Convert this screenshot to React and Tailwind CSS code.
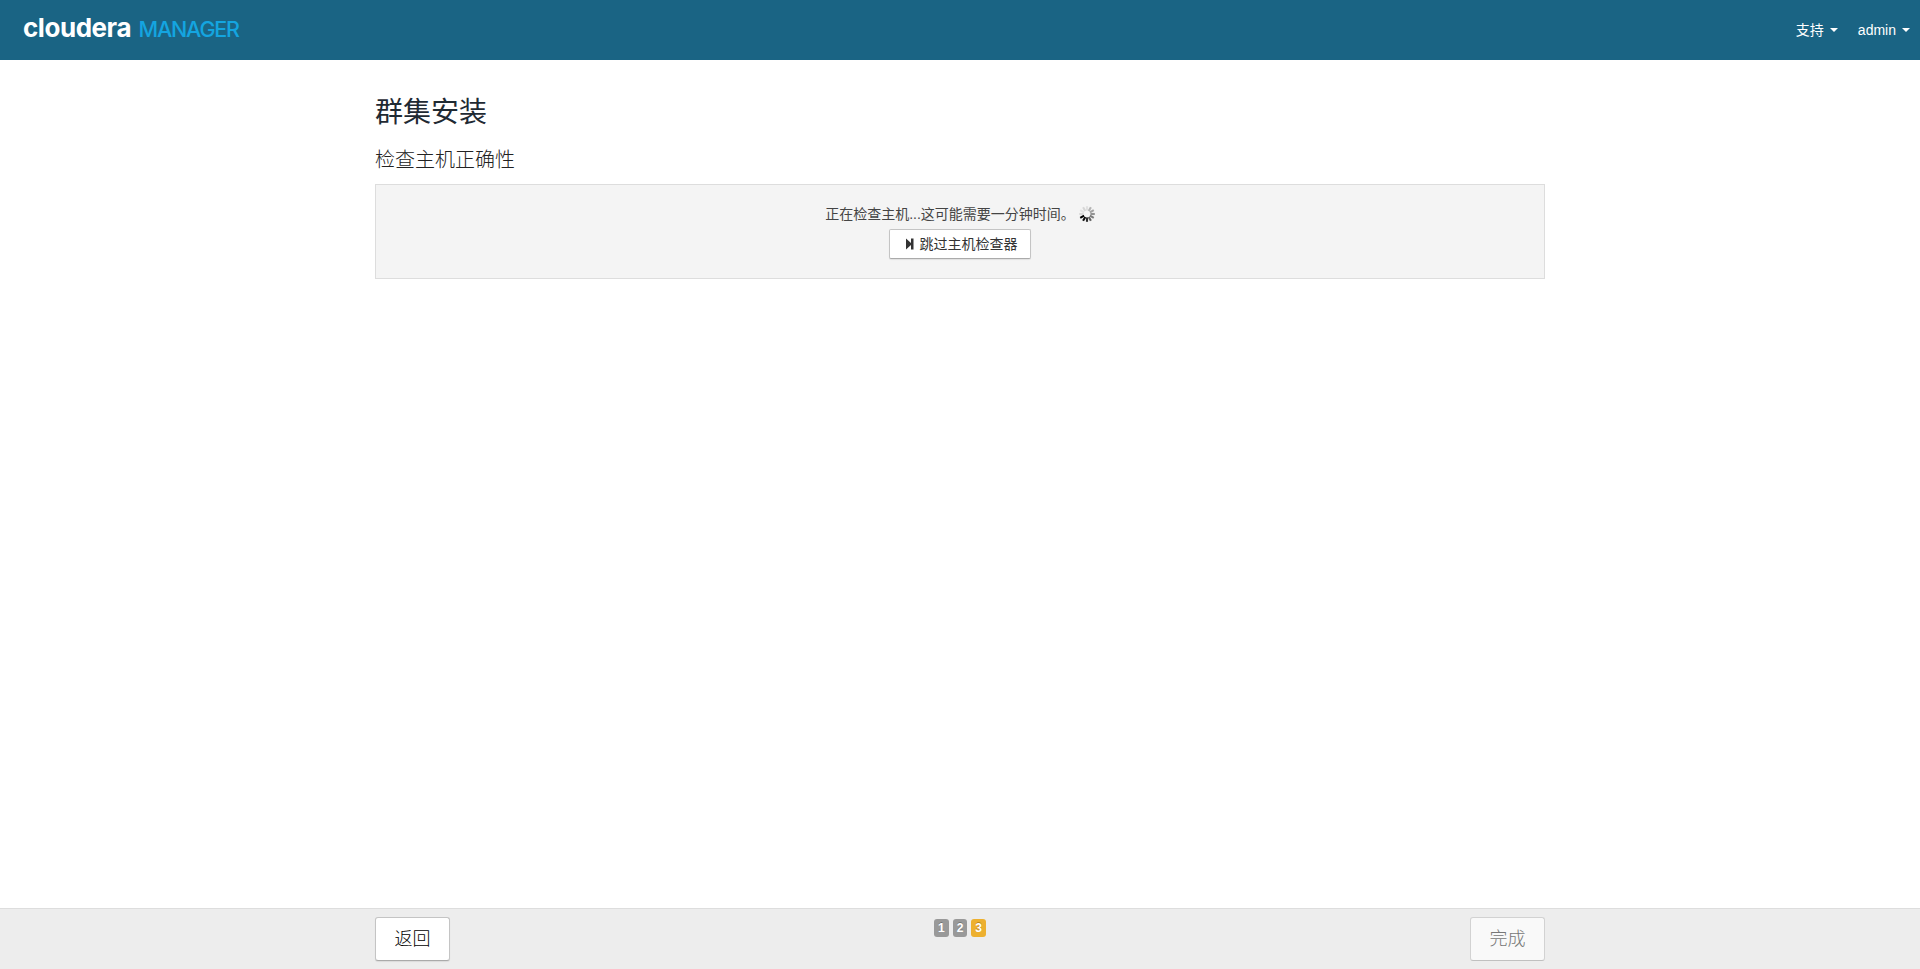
/**
 * App.jsx
 *
 * Cluster installation wizard, host inspection step.
 */

const STEPS = [1, 2, 3];
const CURRENT_STEP = 3;

// Spoke shades, clockwise from twelve o'clock.
const SPOKES = [
  '#e0e0e0', '#b4b4b4', '#a2a2a2', '#929292', '#7c7c7c', '#5e5e5e',
  '#2c2c2c', '#0c0c0c', '#000000', '#d8d8d8', '#e2e2e2', '#d6d6d6',
];

function Logo() {
  return (
    <svg width="240" height="40" viewBox="-4 0 240 40" role="img" aria-label="cloudera MANAGER" className="font-['Inter','Liberation_Sans',sans-serif]">
      <text x="-1" y="27" fontSize="26" fontWeight="650" fill="#ffffff" textLength="108.5" lengthAdjust="spacing">
        cloudera
      </text>
      <text x="114.5" y="27" fontSize="21.5" fontWeight="450" fill="#14a5e0" textLength="101.5" lengthAdjust="spacing">
        MANAGER
      </text>
    </svg>
  );
}

function NavMenu({ label }) {
  return (
    <button className="flex items-center gap-1.5 text-white">
      {label}
      <svg width="8" height="4" viewBox="0 0 8 4" fill="currentColor">
        <path d="M0 0h8L4 4z" />
      </svg>
    </button>
  );
}

function Spinner() {
  return (
    <svg width="16" height="16" viewBox="-8 -8 16 16">
      {SPOKES.map((color, i) => (
        <path key={i} d="M0 -3.4V-7.8" stroke={color} strokeWidth="2.1" transform={`rotate(${i * 30})`} />
      ))}
    </svg>
  );
}

function SkipIcon() {
  return (
    <svg width="8" height="12" viewBox="0 0 8 12" fill="#333333">
      <path d="M0 0.5L5 5V0.5H7.5V11.5H5V7L0 11.5z" />
    </svg>
  );
}

export default function App() {
  return (
    <div className="flex h-screen flex-col bg-white font-['Liberation_Sans','Noto_Sans_CJK_SC',sans-serif] text-sm leading-5 text-[#444444]">
      {/* ── Top bar ──────────────────────────────────────────────────── */}
      <header className="flex h-15 shrink-0 items-start justify-between bg-[#1a6484] pl-5">
        <div className="pt-2.5">
          <Logo />
        </div>
        <nav className="flex gap-5 pt-5 pr-2.5">
          <NavMenu label="支持" />
          <NavMenu label="admin" />
        </nav>
      </header>

      {/* ── Step content ─────────────────────────────────────────────── */}
      <main className="mx-auto w-[1170px] grow pt-[33px]">
        <h1 className="text-[28px] leading-10 text-[#1f2a33]">群集安装</h1>
        <h2 className="mt-[9px] text-xl leading-9 font-light text-[#222222]">检查主机正确性</h2>
        <section className="mt-1.5 flex h-[95px] flex-col items-center border border-[#dddddd] bg-[#f4f4f4] pt-[19px]">
          <p className="flex items-center gap-1">
            正在检查主机...这可能需要一分钟时间。
            <Spinner />
          </p>
          <button className="mt-[5px] flex h-[30px] w-[142px] items-center justify-center gap-1.5 rounded-xs border border-[#c4c4c4] border-b-[#aaaaaa] bg-white pl-[3px] text-[#333333] shadow-[0_1px_1px_rgba(0,0,0,0.08)]">
            <SkipIcon />
            跳过主机检查器
          </button>
        </section>
      </main>

      {/* ── Wizard footer ────────────────────────────────────────────── */}
      <footer className="h-[61px] shrink-0 border-t border-[#dddddd] bg-[#ededed]">
        <div className="mx-auto flex w-[1170px] items-start justify-between pt-2">
          <button className="h-11 w-[75px] rounded-[3px] border border-[#c4c4c4] border-b-[#aaaaaa] bg-white text-lg font-light text-black shadow-[0_1px_1px_rgba(0,0,0,0.08)]">
            返回
          </button>
          <ol className="flex gap-1 pt-0.5 text-xs leading-[18px] font-bold text-white">
            {STEPS.map((step) => (
              <li
                key={step}
                className={`w-[14.67px] rounded-[3px] text-center [text-shadow:0_-1px_0_rgba(0,0,0,0.25)] ${
                  step === CURRENT_STEP ? 'bg-[#edb02f]' : 'bg-[#999999]'
                }`}
              >
                {step}
              </li>
            ))}
          </ol>
          <button disabled className="h-11 w-[75px] rounded-[3px] border border-[#d2d2d2] border-b-[#c0c0c0] bg-[#f9f9f9] text-lg font-light text-[#777777]">
            完成
          </button>
        </div>
      </footer>
    </div>
  );
}
